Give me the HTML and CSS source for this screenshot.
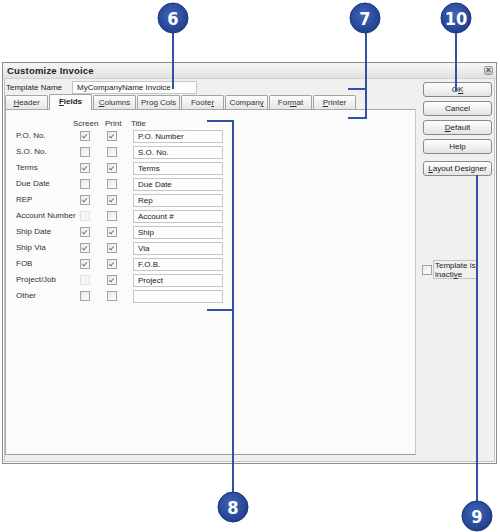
FILE: index.html
```html
<!DOCTYPE html>
<html>
<head>
<meta charset="utf-8">
<title>Customize Invoice</title>
<link rel="stylesheet" href="styles.css">
</head>
<body>
<div class="stage">
  <div class="dialog">
    <div class="titlebar">
      <span class="title">Customize Invoice</span>
      <span class="close">×</span>
    </div>
    <div class="main">
      <div class="left">
        <div class="tplrow">
          <span class="tpllabel">Template Name</span>
          <div class="field wide">MyCompanyName Invoice</div>
        </div>
        <div class="tabs">
          <div class="tab"><u>H</u>eader</div>
          <div class="tab active"><u>F</u>ields</div>
          <div class="tab"><u>C</u>olumns</div>
          <div class="tab">Prog Cols</div>
          <div class="tab">Foote<u>r</u></div>
          <div class="tab">Compan<u>y</u></div>
          <div class="tab">For<u>m</u>at</div>
          <div class="tab"><u>P</u>rinter</div>
        </div>
        <div class="panel">
          <div class="grid">
            <div class="hd"></div>
            <div class="hd hscreen">Screen</div>
            <div class="hd hprint">Print</div>
            <div class="hd htitle">Title</div>

            <div class="lbl">P.O. No.</div>
            <div class="cb on"></div><div class="cb on"></div>
            <div class="field">P.O. Number</div>

            <div class="lbl">S.O. No.</div>
            <div class="cb"></div><div class="cb"></div>
            <div class="field">S.O. No.</div>

            <div class="lbl">Terms</div>
            <div class="cb on"></div><div class="cb on"></div>
            <div class="field">Terms</div>

            <div class="lbl">Due Date</div>
            <div class="cb"></div><div class="cb"></div>
            <div class="field">Due Date</div>

            <div class="lbl">REP</div>
            <div class="cb on"></div><div class="cb on"></div>
            <div class="field">Rep</div>

            <div class="lbl">Account Number</div>
            <div class="cb dis"></div><div class="cb"></div>
            <div class="field">Account #</div>

            <div class="lbl">Ship Date</div>
            <div class="cb on"></div><div class="cb on"></div>
            <div class="field">Ship</div>

            <div class="lbl">Ship Via</div>
            <div class="cb on"></div><div class="cb on"></div>
            <div class="field">Via</div>

            <div class="lbl">FOB</div>
            <div class="cb on"></div><div class="cb on"></div>
            <div class="field">F.O.B.</div>

            <div class="lbl">Project/Job</div>
            <div class="cb dis"></div><div class="cb on"></div>
            <div class="field">Project</div>

            <div class="lbl">Other</div>
            <div class="cb"></div><div class="cb"></div>
            <div class="field"></div>
          </div>
        </div>
      </div>
      <div class="right">
        <div class="btn">O<u>K</u></div>
        <div class="btn">Cancel</div>
        <div class="btn"><u>D</u>efault</div>
        <div class="btn">Help</div>
        <div class="btn layout"><u>L</u>ayout Designer</div>
        <div class="inactive">
          <div class="cb"></div>
          <div class="inlabel">Template is<br>inacti<u>v</u>e</div>
        </div>
      </div>
    </div>
  </div>

  <svg class="callouts" width="500" height="532" viewBox="0 0 500 532">
    <defs>
      <radialGradient id="bub" cx="45%" cy="40%" r="60%">
        <stop offset="0" stop-color="#3f66ba"/>
        <stop offset="1" stop-color="#203f8e"/>
      </radialGradient>
    </defs>
    <g class="lines">
      <line x1="173" y1="30" x2="173" y2="89"/>
      <line x1="366" y1="30" x2="366" y2="119"/>
      <line x1="348" y1="89" x2="367" y2="89"/>
      <line x1="348" y1="118" x2="367" y2="118"/>
      <line x1="456" y1="30" x2="456" y2="91"/>
      <line x1="233" y1="120" x2="233" y2="495"/>
      <line x1="207" y1="121" x2="234" y2="121"/>
      <line x1="207" y1="310" x2="234" y2="310"/>
      <line x1="477" y1="175" x2="477" y2="505"/>
    </g>
    <g class="bubble"><circle cx="173" cy="18" r="15"/><text x="173" y="24.5">6</text></g>
    <g class="bubble"><circle cx="365" cy="18" r="15"/><text x="365" y="24.5">7</text></g>
    <g class="bubble"><circle cx="456" cy="18" r="15"/><text x="456" y="24.5">10</text></g>
    <g class="bubble"><circle cx="233" cy="507" r="15"/><text x="233" y="513.5">8</text></g>
    <g class="bubble"><circle cx="477" cy="516" r="15"/><text x="477" y="522.5">9</text></g>
  </svg>
</div>
</body>
</html>
```

FILE: styles.css
```css
* { box-sizing: border-box; }

html, body {
  margin: 0;
  padding: 0;
  background: #ffffff;
}

body {
  font-family: "Liberation Sans", Arial, sans-serif;
  font-size: 8px;
  color: #222;
}

.stage {
  position: relative;
  width: 500px;
  height: 532px;
  padding: 62px 0 0 2px;
}

.dialog {
  width: 495px;
  height: 402px;
  background: #f0f0ee;
  border: 1px solid #8c8c8c;
  box-shadow: inset 0 0 0 1px #fbfbfb, inset 0 0 0 2px #c4c4c4;
  display: flex;
  flex-direction: column;
}

.titlebar {
  height: 16px;
  display: flex;
  align-items: center;
  justify-content: space-between;
  padding: 0 3px 0 4px;
  background: linear-gradient(#f6f6f4, #e2e2e0);
  border-bottom: 1px solid #d0d0d0;
}

.title {
  font-weight: bold;
  font-size: 9.5px;
  letter-spacing: 0.2px;
  color: #1e1e1e;
}

.close {
  width: 9px;
  height: 9px;
  border: 1px solid #9a9a9a;
  border-radius: 2px;
  background: linear-gradient(#e8e8e8, #bdbdbd);
  color: #555;
  font-size: 9px;
  line-height: 6px;
  text-align: center;
  font-weight: bold;
}

.main {
  flex: 1;
  display: flex;
  padding: 0 0 8px 2px;
}

.left {
  width: 411px;
  display: flex;
  flex-direction: column;
}

.tplrow {
  display: flex;
  align-items: center;
  height: 15px;
  margin-top: 1px;
}

.tpllabel {
  width: 67px;
  padding-left: 1px;
}

.field {
  height: 13px;
  border: 1px solid #c6c6c6;
  background: #fdfdfd;
  padding: 0 4px;
  line-height: 11px;
  white-space: nowrap;
  overflow: hidden;
}

.field.wide {
  width: 125px;
}

.tabs {
  display: flex;
  gap: 1px;
  height: 14px;
  align-items: flex-end;
  position: relative;
  z-index: 1;
}

.tab {
  width: 43px;
  height: 14px;
  border: 1px solid #a4a4a4;
  border-bottom: none;
  border-radius: 2px 2px 0 0;
  background: linear-gradient(#fcfcfc, #e6e6e4);
  text-align: center;
  line-height: 13px;
  color: #333;
}

.tab.active {
  background: #fbfbfb;
  font-weight: bold;
  color: #222;
  margin-bottom: -1px;
  height: 16px;
  line-height: 14px;
}

.panel {
  flex: 1;
  background: #fbfbfb;
  border: 1px solid #a8a8a8;
  border-right-color: #c8c8c8;
  border-bottom-color: #9a9a9a;
  padding: 8px 0 0 10px;
}

.grid {
  display: grid;
  grid-template-columns: 64px 27px 26px 90px;
  grid-template-rows: 12px;
  grid-auto-rows: 16px;
  align-items: start;
}

.hd {
  line-height: 12px;
  color: #333;
}

.hscreen { margin-left: -7px; }
.hprint { margin-left: -2px; }
.htitle { margin-left: -2px; }

.lbl {
  line-height: 12px;
  color: #333;
  white-space: nowrap;
}

.cb {
  width: 10px;
  height: 10px;
  margin-top: 1px;
  border: 1px solid #a2a2a2;
  background: linear-gradient(135deg, #e9e9e6, #fdfdfd);
  position: relative;
}

.cb.dis {
  border-color: #dedede;
  background: #f6f6f6;
}

.cb.on::after {
  content: "";
  position: absolute;
  left: 2px;
  top: 1px;
  width: 2px;
  height: 4px;
  border: solid #7a7a7a;
  border-width: 0 1px 1px 0;
  transform: rotate(40deg);
}

.right {
  width: 80px;
  padding: 3px 0 0 7px;
  display: flex;
  flex-direction: column;
}

.btn {
  width: 69px;
  height: 15px;
  margin-bottom: 4px;
  border: 1px solid #8a8a8a;
  border-radius: 3px;
  background: linear-gradient(#fefefe, #e4e4e2);
  text-align: center;
  line-height: 13px;
  color: #222;
}

.btn.layout {
  margin-top: 3px;
}

.inactive {
  display: flex;
  align-items: center;
  margin-top: 80px;
  margin-left: -1px;
}

.inactive .cb {
  margin-top: 0;
  flex: none;
}

.inlabel {
  margin-left: 1px;
  border: 1px solid #c0c0c0;
  padding: 0 1px;
  line-height: 9px;
  width: 44px;
  height: 19px;
  white-space: nowrap;
  color: #222;
}

.callouts {
  position: absolute;
  left: 0;
  top: 0;
  pointer-events: none;
}

.lines line {
  stroke: #2f52a4;
  stroke-width: 2;
}

.bubble circle {
  fill: url(#bub);
  stroke: #1a3679;
  stroke-width: 1;
}

.bubble text {
  fill: #ffffff;
  font-family: "Liberation Sans Narrow", "DejaVu Sans Condensed", "Liberation Sans", sans-serif;
  font-weight: bold;
  font-size: 18px;
  text-anchor: middle;
}
```
